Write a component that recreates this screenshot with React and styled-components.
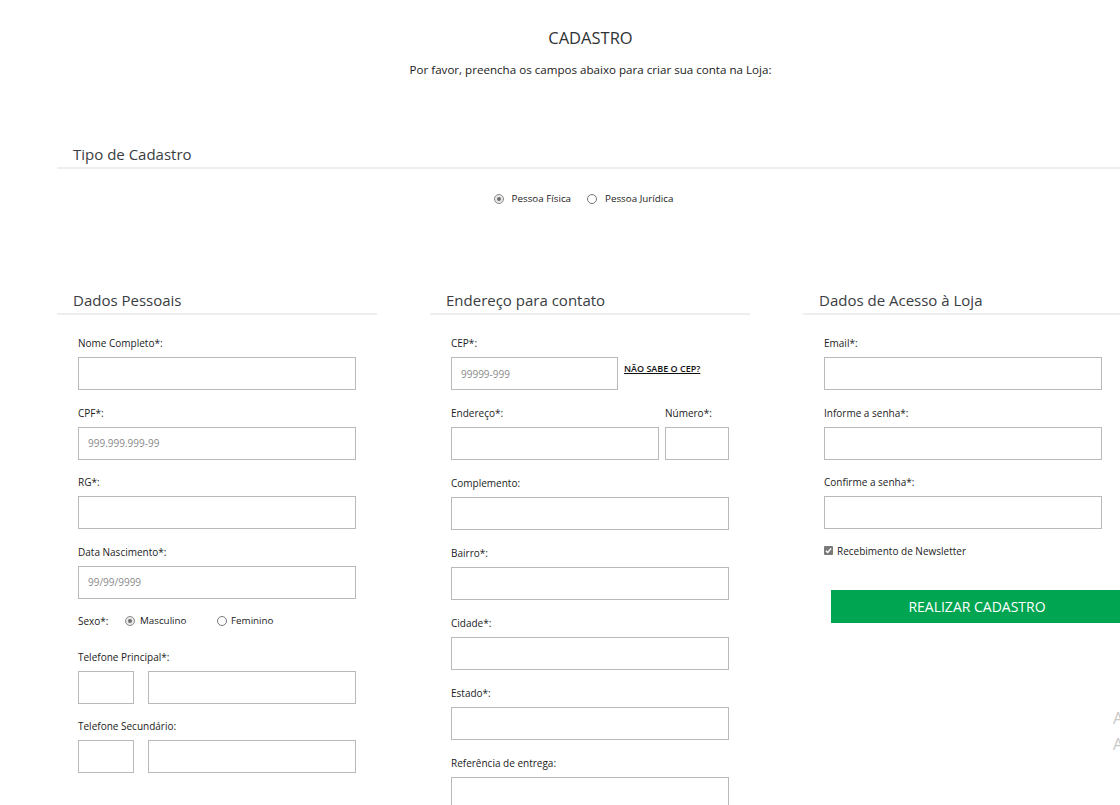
import styled, { createGlobalStyle } from "styled-components"

const GlobalStyle = createGlobalStyle`
    html, body {
        margin: 0;
        padding: 0;
        background: #fff;
        overflow: hidden;
    }
    body {
        font-family: "Open Sans", "DejaVu Sans", sans-serif;
        color: #333;
    }
`

function Radio({ checked, label }) {
    return (
        <RadioLabel>
            <RadioDot checked={checked} />
            {label}
        </RadioLabel>
    )
}

function TextField({ label, placeholder }) {
    return (
        <Field>
            <Label>{label}</Label>
            <Input placeholder={placeholder} />
        </Field>
    )
}

export default function App() {
    return (
        <>
            <GlobalStyle />
            <Page>
                <Container>
                    <Header>
                        <Title>CADASTRO</Title>
                        <Subtitle>Por favor, preencha os campos abaixo para criar sua conta na Loja:</Subtitle>
                    </Header>

                    <SectionTitle top="66px">Tipo de Cadastro</SectionTitle>
                    <TypeRow>
                        <Radio checked label="Pessoa Física" />
                        <Radio label="Pessoa Jurídica" />
                    </TypeRow>

                    <Columns>
                        <Column>
                            <SectionTitle>Dados Pessoais</SectionTitle>
                            <Fields>
                                <TextField label="Nome Completo*:" />
                                <TextField label="CPF*:" placeholder="999.999.999-99" />
                                <TextField label="RG*:" />
                                <TextField label="Data Nascimento*:" placeholder="99/99/9999" />
                                <SexRow>
                                    <Label>Sexo*:</Label>
                                    <Radio checked label="Masculino" />
                                    <Radio label="Feminino" />
                                </SexRow>
                                <Field>
                                    <Label>Telefone Principal*:</Label>
                                    <InputRow gap="14px">
                                        <Input width="56px" />
                                        <Input grow />
                                    </InputRow>
                                </Field>
                                <Field>
                                    <Label>Telefone Secundário:</Label>
                                    <InputRow gap="14px">
                                        <Input width="56px" />
                                        <Input grow />
                                    </InputRow>
                                </Field>
                            </Fields>
                        </Column>

                        <Column>
                            <SectionTitle>Endereço para contato</SectionTitle>
                            <Fields gap="16px">
                                <Field>
                                    <Label>CEP*:</Label>
                                    <InputRow gap="6px">
                                        <Input width="167px" placeholder="99999-999" />
                                        <CepLink href="#">NÃO SABE O CEP?</CepLink>
                                    </InputRow>
                                </Field>
                                <InputRow gap="6px">
                                    <Field grow>
                                        <Label>Endereço*:</Label>
                                        <Input />
                                    </Field>
                                    <Field width="64px">
                                        <Label>Número*:</Label>
                                        <Input />
                                    </Field>
                                </InputRow>
                                <TextField label="Complemento:" />
                                <TextField label="Bairro*:" />
                                <TextField label="Cidade*:" />
                                <TextField label="Estado*:" />
                                <TextField label="Referência de entrega:" />
                            </Fields>
                        </Column>

                        <Column>
                            <SectionTitle>Dados de Acesso à Loja</SectionTitle>
                            <Fields>
                                <TextField label="Email*:" />
                                <TextField label="Informe a senha*:" />
                                <TextField label="Confirme a senha*:" />
                                <CheckRow>
                                    <CheckBox>
                                        <svg width="7" height="7" viewBox="0 0 8 8">
                                            <path d="M1 4.2 L3.1 6.2 L7 1.6" fill="none" stroke="#fff" strokeWidth="1.6" />
                                        </svg>
                                    </CheckBox>
                                    Recebimento de Newsletter
                                </CheckRow>
                            </Fields>
                            <SubmitButton>REALIZAR CADASTRO</SubmitButton>
                        </Column>
                    </Columns>
                </Container>
                <SideWidget>
                    <span>A</span>
                    <span>A</span>
                </SideWidget>
            </Page>
        </>
    )
}

const Page = styled.div`
    position: relative;
    width: 1120px;
    height: 805px;
    overflow: hidden;
`

const Container = styled.div`
    width: 1067px;
    margin-left: 57px;
`

const Header = styled.div`
    display: flex;
    flex-direction: column;
    align-items: center;
    padding-top: 28px;
`

const Title = styled.h1`
    margin: 0;
    font-size: 16.5px;
    line-height: 20px;
    font-weight: 400;
    color: #2f3236;
`

const Subtitle = styled.p`
    margin: 14px 0 0;
    font-size: 11.6px;
    line-height: 16px;
    color: #222;
`

const SectionTitle = styled.h2`
    margin: ${p => p.top || "0"} 0 0;
    padding: 0 16px 3px;
    font-size: 15px;
    line-height: 20px;
    font-weight: 400;
    color: #3a3d42;
    border-bottom: 2px solid #eee;
`

const TypeRow = styled.div`
    display: flex;
    justify-content: center;
    gap: 16px;
    margin-top: 23px;
    padding-right: 14px;
`

const RadioLabel = styled.label`
    display: inline-flex;
    align-items: center;
    gap: 8px;
    font-size: 9.8px;
    line-height: 14px;
    color: #222;
`

const RadioDot = styled.span`
    position: relative;
    width: 8px;
    height: 8px;
    border-radius: 50%;
    border: 1px solid ${p => p.checked ? "#8a8a8a" : "#777"};
    background: ${p => p.checked ? "#e8e8e8" : "#fff"};
    &::after {
        content: "";
        display: ${p => p.checked ? "block" : "none"};
        position: absolute;
        top: 2px;
        left: 2px;
        width: 4px;
        height: 4px;
        border-radius: 50%;
        background: #6e6e6e;
    }
`

const Columns = styled.div`
    display: grid;
    grid-template-columns: repeat(3, 320px);
    column-gap: 53px;
    margin-top: 84px;
`

const Column = styled.div`
    display: flex;
    flex-direction: column;
`

const Fields = styled.div`
    display: flex;
    flex-direction: column;
    gap: ${p => p.gap || "15.5px"};
    padding: 21px 21px 0;
`

const Field = styled.div`
    display: flex;
    flex-direction: column;
    gap: 7px;
    flex: ${p => p.grow ? "1" : "none"};
    width: ${p => p.width || "auto"};
`

const Label = styled.span`
    font-size: 10px;
    line-height: 14px;
    color: #222;
`

const InputRow = styled.div`
    display: flex;
    align-items: flex-start;
    gap: ${p => p.gap};
`

const Input = styled.input`
    box-sizing: border-box;
    display: block;
    width: ${p => p.width || "100%"};
    flex: ${p => p.grow ? "1" : "none"};
    min-width: 0;
    height: 33px;
    margin: 0;
    padding: 0 9px;
    border: 1px solid #b9b9b9;
    border-radius: 0;
    font-family: "Open Sans", sans-serif;
    font-size: 10px;
    color: #333;
    outline: none;
    &::placeholder {
        color: #8a8a8a;
    }
`

const CepLink = styled.a`
    margin-top: 5px;
    font-size: 9px;
    font-weight: 600;
    color: #111;
    text-decoration: underline;
    white-space: nowrap;
`

const SexRow = styled.div`
    display: flex;
    align-items: center;
    margin-bottom: 6px;
    & > span { width: 47px; }
    & > label:nth-of-type(1) { width: 92px; gap: 5px; }
    & > label:nth-of-type(2) { gap: 4px; }
`

const CheckRow = styled.label`
    display: flex;
    align-items: center;
    gap: 4px;
    margin-top: -1px;
    font-size: 10px;
    line-height: 14px;
    color: #222;
`

const CheckBox = styled.span`
    display: flex;
    align-items: center;
    justify-content: center;
    width: 9px;
    height: 9px;
    border-radius: 1px;
    background: #7a7a7a;
`

const SubmitButton = styled.button`
    margin: 32px 0 0 28px;
    height: 33px;
    border: none;
    background: #00a551;
    color: #fff;
    font-family: "Open Sans", sans-serif;
    font-size: 14px;
    cursor: pointer;
`

const SideWidget = styled.div`
    position: absolute;
    left: 1113px;
    top: 708px;
    display: flex;
    flex-direction: column;
    gap: 6px;
    font-size: 16px;
    line-height: 20px;
    color: #c8c8c8;
`
